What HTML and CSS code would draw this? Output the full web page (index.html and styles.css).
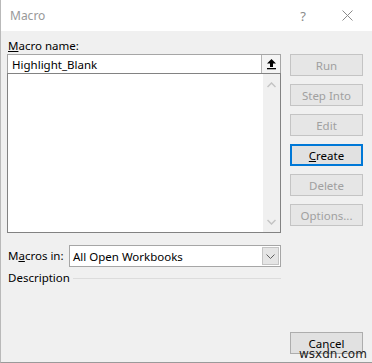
FILE: index.html
```html
<!DOCTYPE html>
<html lang="en">
<head>
    <meta charset="UTF-8">
    <title>Macro</title>
    <link rel="stylesheet" href="styles.css">
</head>
<body>
    <div class="dialog">
        <div class="titlebar">
            <span class="title">Macro</span>
            <span class="help">?</span>
            <svg class="close" width="11" height="11" viewBox="0 0 11 11">
                <path d="M0.5 0.5 L10.5 10.5 M10.5 0.5 L0.5 10.5" stroke="#8a8a8a" stroke-width="1" fill="none"/>
            </svg>
        </div>

        <div class="content">
            <div class="left">
                <div class="label"><u>M</u>acro name:</div>
                <div class="name-box">
                    <span class="name-text">Highlight_Blank</span>
                    <span class="up-btn">
                        <svg width="11" height="12" viewBox="0 0 11 12">
                            <path d="M5.5 1 L10 5.5 L7 5.5 L7 9 L4 9 L4 5.5 L1 5.5 Z" fill="#000"/>
                            <rect x="1" y="10" width="9" height="1.3" fill="#000"/>
                        </svg>
                    </span>
                </div>
                <div class="list">
                    <div class="list-body"></div>
                    <div class="scroll">
                        <svg width="9" height="6" viewBox="0 0 9 6"><path d="M0.5 5 L4.5 1 L8.5 5" stroke="#c4c4c4" stroke-width="1.5" fill="none"/></svg>
                        <svg width="9" height="6" viewBox="0 0 9 6"><path d="M0.5 1 L4.5 5 L8.5 1" stroke="#c4c4c4" stroke-width="1.5" fill="none"/></svg>
                    </div>
                </div>
                <div class="macros-in">
                    <span class="label">M<u>a</u>cros in:</span>
                    <div class="select">
                        <span class="select-text">All Open Workbooks</span>
                        <span class="drop-btn">
                            <svg width="9" height="5" viewBox="0 0 9 5"><path d="M0.5 0.5 L4.5 4.5 L8.5 0.5" stroke="#606060" stroke-width="1" fill="none"/></svg>
                        </span>
                    </div>
                </div>
                <div class="desc">
                    <span class="label">Description</span>
                    <span class="rule"></span>
                </div>
            </div>

            <div class="right">
                <button class="btn" disabled>Run</button>
                <button class="btn" disabled>Step Into</button>
                <button class="btn" disabled>Edit</button>
                <button class="btn focus"><u>C</u>reate</button>
                <button class="btn" disabled>Delete</button>
                <button class="btn" disabled>Options...</button>
                <button class="btn cancel">Cancel</button>
            </div>
        </div>

        <span class="watermark">wsxdn.com</span>
    </div>
</body>
</html>
```

FILE: styles.css
```css
* {
    box-sizing: border-box;
}
body {
    margin: 0;
    font-family: "Noto Sans", "Open Sans", sans-serif;
    font-size: 11.5px;
    color: #000;
    background: #f0f0f0;
}
.dialog {
    position: relative;
    width: 372px;
    height: 363px;
    background: #f0f0f0;
    border-left: 1px solid #b9b9b9;
    border-bottom: 1px solid #9a9a9a;
    display: flex;
    flex-direction: column;
}
.titlebar {
    height: 31px;
    background: #fff;
    display: flex;
    align-items: center;
    padding-left: 9px;
}
.title {
    color: #999;
    font-size: 12px;
    flex: 1;
}
.help {
    color: #8a8a8a;
    font-size: 13px;
    margin-right: 36px;
}
.close {
    margin-right: 19px;
}
.content {
    flex: 1;
    display: flex;
    padding: 7px 8px 8px 6px;
}
.left {
    width: 274px;
    display: flex;
    flex-direction: column;
}
.label {
    line-height: 16px;
    padding-left: 1px;
}
.name-box {
    height: 20px;
    background: #fff;
    border: 1px solid #a6a6a6;
    display: flex;
    align-items: center;
}
.name-text {
    flex: 1;
    padding-left: 4px;
}
.up-btn {
    width: 19px;
    height: 18px;
    border-left: 1px solid #b4b4b4;
    background: #f4f4f4;
    display: flex;
    align-items: center;
    justify-content: center;
}
.list {
    height: 160px;
    margin-top: -1px;
    background: #fff;
    border: 1px solid #828282;
    display: flex;
}
.list-body {
    flex: 1;
}
.scroll {
    width: 17px;
    background: #f0f0f0;
    display: flex;
    flex-direction: column;
    justify-content: space-between;
    align-items: center;
    padding: 8px 0 7px;
}
.macros-in {
    margin-top: 12px;
    display: flex;
    align-items: center;
}
.macros-in .label {
    width: 62px;
}
.select {
    flex: 1;
    height: 22px;
    background: #fff;
    border: 1px solid #a6a6a6;
    display: flex;
    align-items: center;
}
.select-text {
    flex: 1;
    padding-left: 3px;
}
.drop-btn {
    width: 17px;
    height: 18px;
    margin-right: 1px;
    background: #e5e5e5;
    border: 1px solid #c4c4c4;
    display: flex;
    align-items: center;
    justify-content: center;
}
.desc {
    margin-top: 3px;
    display: flex;
    align-items: center;
}
.rule {
    flex: 1;
    height: 1px;
    background: #dcdcdc;
    margin-left: 3px;
}
.right {
    width: 73px;
    margin-left: 9px;
    padding-top: 16px;
    display: flex;
    flex-direction: column;
    gap: 8px;
}
.btn {
    height: 22px;
    padding: 0;
    font-family: inherit;
    font-size: 11.5px;
    color: #000;
    background: #e1e1e1;
    border: 1px solid #adadad;
    border-radius: 0;
}
.btn:disabled {
    color: #a0a0a0;
    background: #e6e6e6;
    border-color: #c4c4c4;
}
.btn.focus {
    border: 2px solid #0078d7;
}
.btn.cancel {
    margin-top: auto;
}
.watermark {
    position: absolute;
    left: 298px;
    top: 347px;
    font-family: "DejaVu Sans", sans-serif;
    font-size: 12px;
    color: #222;
}
```
